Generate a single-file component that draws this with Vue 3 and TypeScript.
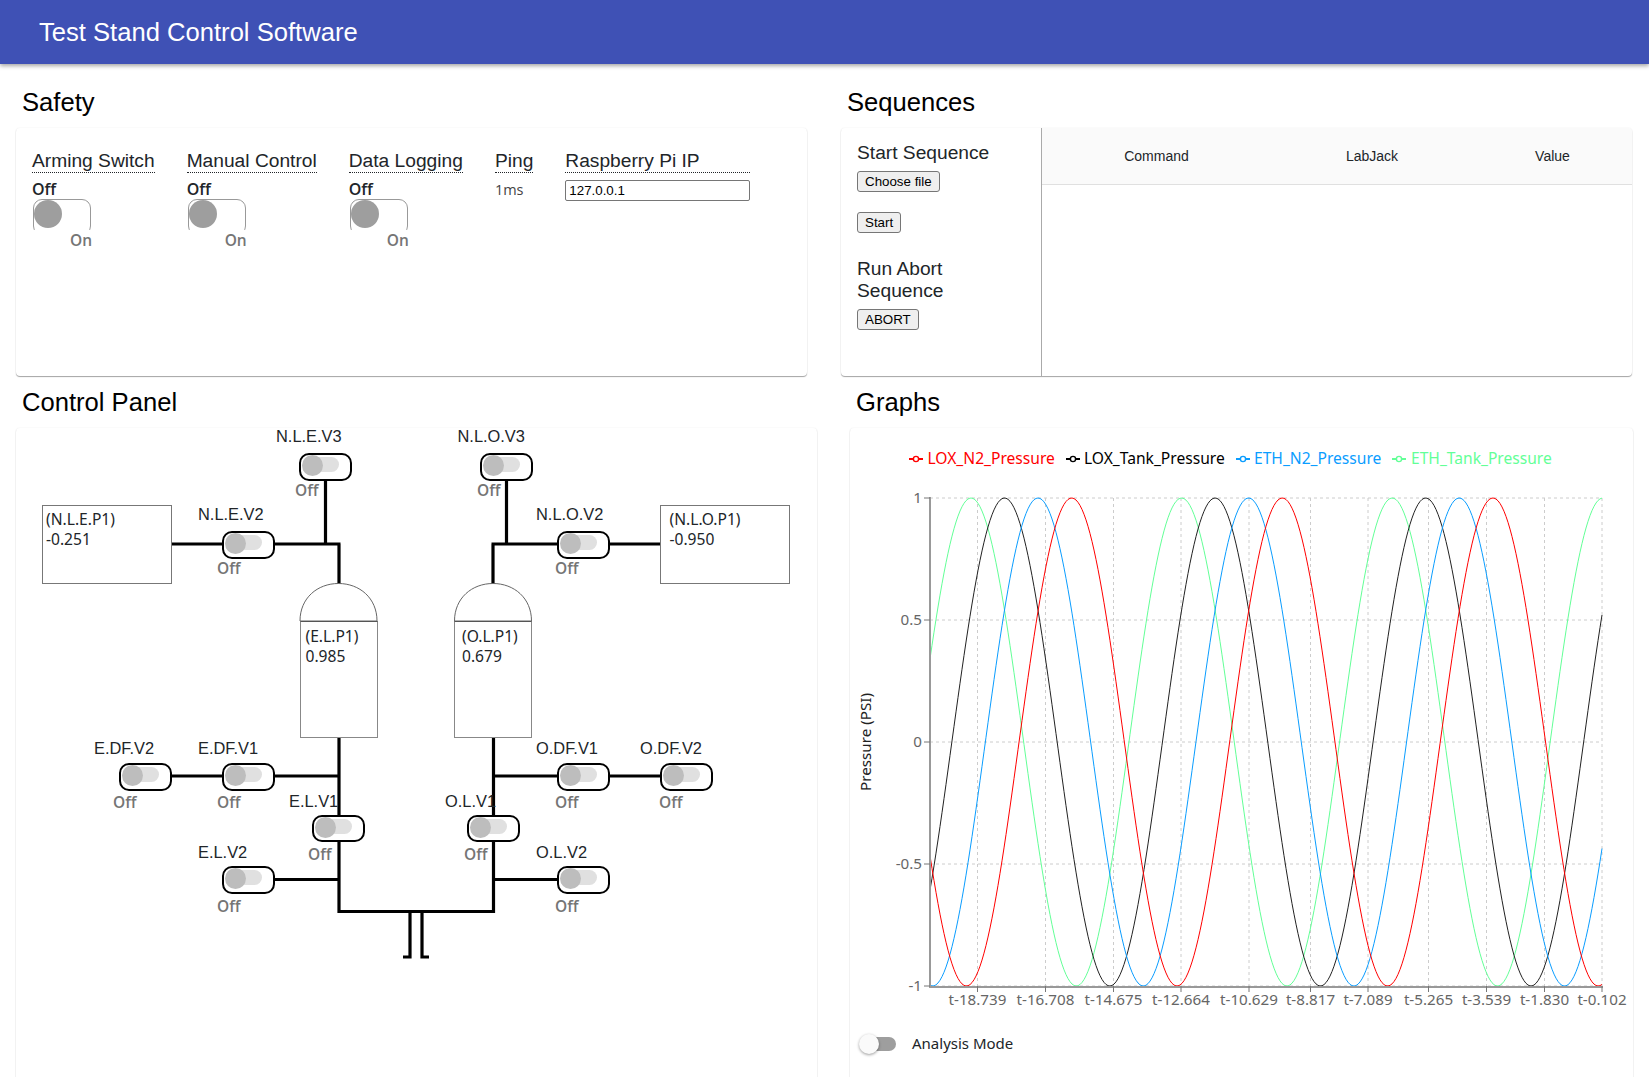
<template>
  <div class="page">
    <header class="appbar">Test Stand Control Software</header>

    <div class="row row-top">
      <section class="col">
        <h2 class="title">Safety</h2>
        <div class="card safety">
          <div v-for="s in switches" :key="s" class="item">
            <div class="head">{{ s }}</div>
            <div class="state">Off</div>
            <div class="arm-clip">
              <div class="arm"><span class="arm-knob"></span></div>
            </div>
            <div class="on">On</div>
          </div>
          <div class="item">
            <div class="head">Ping</div>
            <div class="ping">1ms</div>
          </div>
          <div class="item">
            <div class="head wide">Raspberry Pi IP</div>
            <input class="ip" value="127.0.0.1" />
          </div>
        </div>
      </section>

      <section class="col">
        <h2 class="title">Sequences</h2>
        <div class="card sequences">
          <div class="seq-side">
            <div class="seq-title">Start Sequence</div>
            <button class="btn choose">Choose file</button>
            <button class="btn start">Start</button>
            <div class="seq-title run">Run Abort<br />Sequence</div>
            <button class="btn">ABORT</button>
          </div>
          <div class="seq-table">
            <div class="seq-head">
              <span>Command</span>
              <span>LabJack</span>
              <span>Value</span>
            </div>
          </div>
        </div>
      </section>
    </div>

    <div class="row row-bottom">
      <section class="col panel-col">
        <h2 class="title">Control Panel</h2>
        <div class="card canvas">
          <svg class="pipes" width="801" height="649" viewBox="16 428 801 649">
            <path v-for="(d, i) in pipes" :key="i" :d="d" class="pipe" />
            <path v-for="t in tanks" :key="t.name" class="dome" :d="domePath(t.x)" />
          </svg>

          <div
            v-for="p in gauges"
            :key="p.name"
            class="gauge"
            :style="{ left: p.x - 16 + 'px', top: p.y - 428 + 'px', paddingLeft: p.pad + 'px' }"
          >
            ({{ p.name }})<br />{{ p.value }}
          </div>

          <div
            v-for="t in tanks"
            :key="t.name"
            class="tank"
            :style="{ left: t.x - 16 + 'px', paddingLeft: t.pad + 'px' }"
          >
            ({{ t.name }})<br />{{ t.value }}
          </div>

          <template v-for="v in valves" :key="v.name">
            <div class="vlabel" :style="{ left: v.lx - 16 + 'px', top: v.ly - 438 + 'px' }">{{ v.name }}</div>
            <div class="valve" :style="{ left: v.x - 16 + 'px', top: v.y - 428 + 'px' }">
              <span class="v-track"></span>
              <span class="v-knob"></span>
            </div>
            <div class="voff" :style="{ left: v.ox - 16 + 'px', top: v.oy - 438 + 'px' }">Off</div>
          </template>
        </div>
      </section>

      <section class="col graph-col">
        <h2 class="title graphs-title">Graphs</h2>
        <div class="card graph">
          <svg class="chart" width="783" height="597" viewBox="850 428 783 597">
            <g v-for="l in legend" :key="l.name">
              <path :d="`M${l.ix} 459h14`" :stroke="l.color" stroke-width="2" fill="none" />
              <circle :cx="l.ix + 7" cy="459" r="2.6" fill="#fff" :stroke="l.color" stroke-width="1.4" />
              <text :x="l.tx" y="464" :fill="l.color" class="legend-text">{{ l.name }}</text>
            </g>

            <path v-for="g in yTicks" :key="'h' + g.label" :d="`M930 ${g.y}H1602`" class="grid" />
            <path v-for="g in xTicks" :key="'v' + g.label" :d="`M${g.x} 498V986`" class="grid" />

            <path v-for="s in series" :key="s.color" :d="s.d" :stroke="s.color" class="line" />

            <path d="M930 497V987H1603" class="axis" />
            <template v-for="g in yTicks" :key="'y' + g.label">
              <path :d="`M924 ${g.y}H930`" class="tick" />
              <text x="922" :y="g.y + 5" text-anchor="end" class="tick-text">{{ g.label }}</text>
            </template>
            <template v-for="g in xTicks" :key="'x' + g.label">
              <path :d="`M${g.x} 986V992`" class="tick" />
              <text :x="g.x" y="1005" text-anchor="middle" class="tick-text">{{ g.label }}</text>
            </template>

            <text transform="translate(871 742) rotate(-90)" text-anchor="middle" class="y-title">Pressure (PSI)</text>
          </svg>

          <div class="analysis">
            <span class="a-switch">
              <span class="a-track"></span>
              <span class="a-knob"></span>
            </span>
            <span class="a-label">Analysis Mode</span>
          </div>
        </div>
      </section>
    </div>
  </div>
</template>

<script setup lang="ts">
const switches = ["Arming Switch", "Manual Control", "Data Logging"];

const gauges = [
  { name: "N.L.E.P1", value: "-0.251", x: 42, y: 505, pad: 3 },
  { name: "N.L.O.P1", value: "-0.950", x: 660, y: 505, pad: 8.5 },
];

const tanks = [
  { name: "E.L.P1", value: "0.985", x: 299.5, pad: 5 },
  { name: "O.L.P1", value: "0.679", x: 454, pad: 7 },
];

function domePath(x: number) {
  return `M${x + 0.5} 621C${x + 0.5} 598 ${x + 18} 583.5 ${x + 39} 583.5S${x + 77.5} 598 ${x + 77.5} 621Z`;
}

const valves = [
  { name: "N.L.E.V3", x: 299, y: 453, lx: 276, ly: 435.5, ox: 295, oy: 490 },
  { name: "N.L.O.V3", x: 480, y: 453, lx: 457.5, ly: 435.5, ox: 477, oy: 490 },
  { name: "N.L.E.V2", x: 222, y: 531, lx: 198, ly: 514, ox: 217, oy: 567.5 },
  { name: "N.L.O.V2", x: 557, y: 531, lx: 536, ly: 514, ox: 555, oy: 567.5 },
  { name: "E.DF.V2", x: 119, y: 763, lx: 94, ly: 748, ox: 113, oy: 802 },
  { name: "E.DF.V1", x: 222, y: 763, lx: 198, ly: 748, ox: 217, oy: 802 },
  { name: "O.DF.V1", x: 557, y: 763, lx: 536, ly: 748, ox: 555, oy: 802 },
  { name: "O.DF.V2", x: 660, y: 763, lx: 640, ly: 748, ox: 659, oy: 802 },
  { name: "E.L.V1", x: 312, y: 814.5, lx: 289, ly: 801, ox: 308, oy: 854 },
  { name: "O.L.V1", x: 467, y: 814.5, lx: 445, ly: 801, ox: 464, oy: 854 },
  { name: "E.L.V2", x: 222, y: 866, lx: 198, ly: 852, ox: 217, oy: 906 },
  { name: "O.L.V2", x: 557, y: 866, lx: 536, ly: 852, ox: 555, oy: 906 },
];

const pipes = [
  "M325.5 480V544",
  "M171 544H222M275 544H340.5M339 544V584",
  "M506.5 480V544",
  "M491.5 544H558M610 544H661M493 544V584",
  "M339 737V911.5H493.5V737",
  "M171 776H222M275 776H339",
  "M275 879.5H339",
  "M493.5 776H558M610 776H661",
  "M493.5 879.5H558",
  "M403 957H410V911.5M429 957H422V911.5",
];

const xTicks = [
  { x: 977.5, label: "t-18.739" },
  { x: 1045.5, label: "t-16.708" },
  { x: 1113.5, label: "t-14.675" },
  { x: 1181, label: "t-12.664" },
  { x: 1249, label: "t-10.629" },
  { x: 1310.5, label: "t-8.817" },
  { x: 1368, label: "t-7.089" },
  { x: 1428.5, label: "t-5.265" },
  { x: 1486.5, label: "t-3.539" },
  { x: 1544.5, label: "t-1.830" },
  { x: 1602, label: "t-0.102" },
];

const yTicks = [
  { y: 498, label: "1" },
  { y: 620, label: "0.5" },
  { y: 742, label: "0" },
  { y: 864, label: "-0.5" },
  { y: 986, label: "-1" },
];

const legend = [
  { name: "LOX_N2_Pressure", color: "#ff0000", ix: 909, tx: 927.5 },
  { name: "LOX_Tank_Pressure", color: "#000000", ix: 1066, tx: 1084 },
  { name: "ETH_N2_Pressure", color: "#0a9dff", ix: 1236, tx: 1254 },
  { name: "ETH_Tank_Pressure", color: "#63ff97", ix: 1392, tx: 1411 },
];

// sine waves, same period, each one radian behind the last
const PERIOD = 210.6;

function wave(peak: number) {
  const pts: string[] = [];
  for (let x = 930; x <= 1602; x += 2) {
    const y = 742 - 244 * Math.cos((2 * Math.PI * (x - peak)) / PERIOD);
    pts.push(`${x} ${y.toFixed(2)}`);
  }
  return "M" + pts.join("L");
}

const series = [
  { color: "#63ff97", d: wave(971) },
  { color: "#222222", d: wave(1004.5) },
  { color: "#0a9dff", d: wave(1038) },
  { color: "#ff0000", d: wave(1071.7) },
];
</script>

<style>
html,
body {
  margin: 0;
  overflow: hidden;
  background: #fff;
}
</style>

<style scoped>
.page { font-family: "Liberation Sans", Arial, sans-serif; color: #212529; height: 1077px; overflow: hidden; }
.appbar { height: 64px; line-height: 64px; padding-left: 39px; background: #3f51b5; color: #fff; font-size: 25.6px; box-shadow: 0 2px 4px rgba(0, 0, 0, 0.35); position: relative; }

.row { display: flex; padding: 0 16px; }
.row-top { gap: 34px; }
.row-bottom { gap: 33px; }
.col { width: 791px; }
.panel-col { width: 801px; }
.graph-col { width: 783px; }

.title { margin: 0; height: 64px; line-height: 76px; padding-left: 6px; font-size: 25.6px; font-weight: 400; color: #000; }
.row-bottom .title { height: 52px; line-height: 52px; }
.graphs-title { padding-left: 6px; }

.card { background: #fff; border-radius: 4px; box-shadow: 0 1px 1px rgba(0, 0, 0, 0.35), 0 0 2px rgba(0, 0, 0, 0.07); box-sizing: border-box; }

.safety { height: 248px; display: flex; gap: 32px; padding: 22px 16px 0; }
.head { height: 22px; line-height: 22px; font-size: 19.2px; border-bottom: 1px dotted #212529; }
.head.wide { width: 185px; }
.state { margin-top: 6px; height: 20px; font: 600 16px/20px "Open Sans", sans-serif; color: #212529; }
.arm-clip { width: 58px; height: 31px; margin-left: 1px; overflow: hidden; }
.arm { box-sizing: border-box; height: 36px; border: 1px solid #999; border-radius: 9px; }
.arm-knob { display: block; width: 28px; height: 28px; border-radius: 50%; background: #9e9e9e; }
.on { margin-left: 38px; height: 20px; font: 600 15.5px/20px "Open Sans", sans-serif; color: #757575; }
.ping { margin-top: 7px; font: 400 14.5px/20px "Open Sans", sans-serif; color: #444; }
.ip { display: block; box-sizing: border-box; width: 185px; height: 21px; margin-top: 7px; padding: 1px 3px; border: 1px solid #767676; border-radius: 2px; font: 13.33px "Liberation Sans", Arial, sans-serif; color: #000; background: #fff; }

.sequences { height: 248px; display: flex; overflow: hidden; }
.seq-side { box-sizing: border-box; width: 201px; padding: 14px 16px 0; border-right: 1px solid #aaa; }
.seq-title { font-size: 19.2px; line-height: 22px; }
.seq-title.run { margin-top: 25px; }
.btn { display: block; box-sizing: border-box; height: 21px; margin-top: 7px; padding: 1px 7px; background: #efefef; border: 1px solid #767676; border-radius: 3px; font: 13.33px "Liberation Sans", Arial, sans-serif; color: #000; }
.btn.start { margin-top: 20px; }
.seq-table { flex: 1; }
.seq-head { display: grid; grid-template-columns: 229px 202px 159px; height: 57px; align-items: center; text-align: center; background: #fafafa; border-bottom: 1px solid #e0e0e0; box-sizing: border-box; font-size: 14px; }

.canvas { position: relative; height: 720px; }
.pipes { position: absolute; left: 0; top: 0; }
.pipe { fill: none; stroke: #000; stroke-width: 3.2; }
.dome { fill: #fff; stroke: #666; stroke-width: 1; }
.gauge { position: absolute; box-sizing: border-box; width: 130px; height: 79px; border: 1px solid #777; padding-top: 3px; font: 400 15.6px/20px "Noto Sans", sans-serif; background: #fff; }
.tank { position: absolute; top: 193px; box-sizing: border-box; width: 78px; height: 117px; padding-top: 4px; border: 1px solid #888; border-top-color: #555; font: 400 15.6px/20px "Noto Sans", sans-serif; background: #fff; }
.vlabel { position: absolute; font-size: 16.4px; line-height: 20px; white-space: nowrap; }
.voff { position: absolute; font: 600 15.5px/20px "Open Sans", sans-serif; color: #757575; }
.valve { position: absolute; box-sizing: border-box; width: 53px; height: 27.5px; border: 2.5px solid #000; border-radius: 10px; background: #fff; }
.v-track { position: absolute; left: 11px; top: 2px; width: 27px; height: 15px; border-radius: 8px; background: #e0e0e0; }
.v-knob { position: absolute; left: 1px; top: 0; width: 21px; height: 21px; border-radius: 50%; background: #bdbdbd; }

.graph { height: 720px; }
.chart { display: block; }
.grid { fill: none; stroke: #ccc; stroke-width: 1; stroke-dasharray: 3 3; }
.line { fill: none; stroke-width: 1; }
.axis { fill: none; stroke: #999; stroke-width: 2; }
.tick { fill: none; stroke: #777; stroke-width: 1; }
.tick-text { font: 400 15.2px "Noto Sans", sans-serif; fill: #666; }
.legend-text { font: 400 15.6px "Noto Sans", sans-serif; }
.y-title { font: 400 15.2px "Noto Sans", sans-serif; fill: #222; }

.analysis { display: flex; align-items: center; gap: 16px; padding: 7px 0 0 9px; }
.a-switch { position: relative; display: block; width: 37px; height: 20px; margin-top: 2px; }
.a-track { position: absolute; left: 3px; top: 3px; width: 34px; height: 14px; border-radius: 7px; background: #9e9e9e; }
.a-knob { position: absolute; left: 0; top: 0; width: 20px; height: 20px; border-radius: 50%; background: #fafafa; box-shadow: 0 1px 3px rgba(0, 0, 0, 0.4); }
.a-label { font: 400 15px "Noto Sans", sans-serif; }
</style>
